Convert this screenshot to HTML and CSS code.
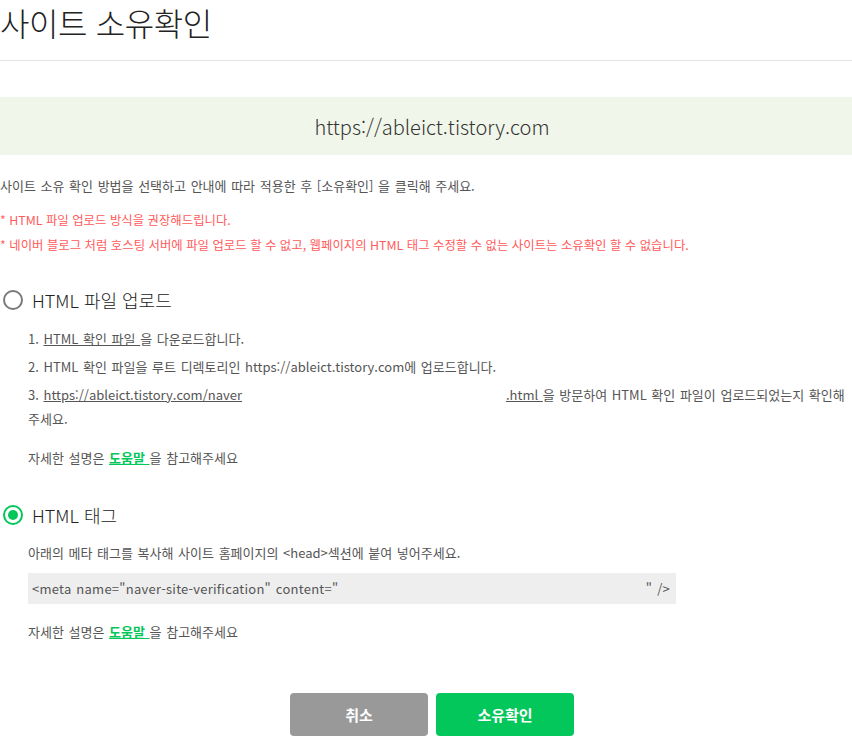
FILE: index.html
```html
<!DOCTYPE html>
<html lang="ko">
<head>
<meta charset="utf-8">
<title>사이트 소유확인</title>
<link rel="stylesheet" href="styles.css">
</head>
<body>
<div class="page">
  <h1 class="title">사이트 소유확인</h1>
  <div class="site-box">https://ableict.tistory.com</div>
  <p class="intro">사이트 소유 확인 방법을 선택하고 안내에 따라 적용한 후 [소유확인] 을 클릭해 주세요.</p>
  <p class="warn warn-first">* HTML 파일 업로드 방식을 권장해드립니다.</p>
  <p class="warn">* 네이버 블로그 처럼 호스팅 서버에 파일 업로드 할 수 없고, 웹페이지의 HTML 태그 수정할 수 없는 사이트는 소유확인 할 수 없습니다.</p>

  <div class="option">
    <div class="option-head"><span class="radio"></span><span class="option-label">HTML 파일 업로드</span></div>
    <div class="option-body">
      <ol class="steps">
        <li>1. <a class="link">HTML 확인 파일 </a>을 다운로드합니다.</li>
        <li>2. HTML 확인 파일을 루트 디렉토리인 https://ableict.tistory.com에 업로드합니다.</li>
        <li><span>3. </span><a class="link">https://ableict.tistory.com/naver</a><span class="gap"></span><a class="link">.html </a><span>을 방문하여 HTML 확인 파일이 업로드되었는지 확인해</span> <span>주세요.</span></li>
      </ol>
      <p class="help">자세한 설명은 <a class="help-link">도움말 </a>을 참고해주세요</p>
    </div>
  </div>

  <div class="option option-second">
    <div class="option-head"><span class="radio radio-on"></span><span class="option-label">HTML 태그</span></div>
    <div class="option-body">
      <p class="desc">아래의 메타 태그를 복사해 사이트 홈페이지의 &lt;head&gt;섹션에 붙여 넣어주세요.</p>
      <div class="code"><span>&lt;meta name="naver-site-verification" content="</span><span>" /&gt;</span></div>
      <p class="help">자세한 설명은 <a class="help-link">도움말 </a>을 참고해주세요</p>
    </div>
  </div>

  <div class="buttons">
    <button class="btn btn-cancel">취소</button>
    <button class="btn btn-ok">소유확인</button>
  </div>
</div>
</body>
</html>
```

FILE: styles.css
```css
* { box-sizing: border-box; }
html, body { margin: 0; padding: 0; background: #fff; }
body {
  font-family: "Noto Sans CJK KR", "Noto Sans", sans-serif;
  color: #555;
  font-size: 13px;
  word-break: keep-all;
}
.page { width: 852px; overflow: hidden; }
.title {
  margin: 0;
  padding: 2px 0 0 0;
  height: 61px;
  line-height: 40px;
  font-size: 32px;
  font-weight: 300;
  color: #222;
  border-bottom: 1px solid #e3e3e3;
  letter-spacing: -0.4px;
}
.site-box {
  margin-top: 36px;
  height: 58px;
  background: #f0f6e9;
  display: flex;
  align-items: center;
  justify-content: center;
  padding-left: 12px;
  font-size: 20px;
  font-weight: 300;
  color: #333;
}
.intro {
  margin: 21px 0 0 0;
  line-height: 20px;
  font-size: 13px;
  word-spacing: 1px;
}
.warn {
  margin: 5px 0 0 0;
  line-height: 20px;
  font-size: 12.4px;
  color: #ff5b5b;
}
.warn-first { margin-top: 14px; }
.option { margin-top: 34px; }
.option-second { margin-top: 36px; }
.option-head {
  display: flex;
  align-items: center;
  height: 22px;
  padding-left: 3px;
}
.radio {
  width: 20px;
  height: 20px;
  border: 2px solid #7a7a7a;
  border-radius: 50%;
  display: inline-flex;
  align-items: center;
  justify-content: center;
  flex: none;
}
.radio-on { border-color: #03c75a; }
.radio-on::after {
  content: "";
  width: 10px;
  height: 10px;
  border-radius: 50%;
  background: #03c75a;
}
.option-label {
  margin-left: 9px;
  font-size: 18px;
  color: #222;
  font-weight: 300;
}
.option-body { padding-left: 28px; }
.steps {
  list-style: none;
  margin: 14px 0 0 0;
  padding: 0;
  font-size: 13px;
  word-spacing: 1px;
}
.steps li { line-height: 28px; }
.steps li:last-child { line-height: 24px; padding-top: 2px; }
.link { color: #555; text-decoration: underline; }
.gap { display: inline-block; width: 264px; height: 1px; vertical-align: middle; }
.help {
  margin: 17px 0 0 0;
  line-height: 20px;
  font-size: 13px;
  word-spacing: 1px;
}
.help-link {
  color: #03c75a;
  font-weight: 700;
  text-decoration: underline;
}
.desc {
  margin: 17px 0 0 0;
  line-height: 20px;
  word-spacing: 1px;
}
.code {
  margin-top: 10px;
  width: 648px;
  height: 31px;
  background: #eeeeee;
  display: flex;
  align-items: center;
  justify-content: space-between;
  padding: 0 6px 0 4px;
  word-spacing: 1px;
  letter-spacing: 0.25px;
  color: #555;
}
.option-second .help { margin-top: 18px; }
.buttons {
  margin-top: 51px;
  display: flex;
  justify-content: center;
  gap: 8px;
  padding-left: 12px;
}
.btn {
  width: 138px;
  height: 43px;
  border: none;
  border-radius: 4px;
  color: #fff;
  font-family: "Noto Sans CJK KR", "Noto Sans", sans-serif;
  font-weight: 700;
  font-size: 15px;
}
.btn-cancel { background: #999; }
.btn-ok { background: #03c75a; }
```
